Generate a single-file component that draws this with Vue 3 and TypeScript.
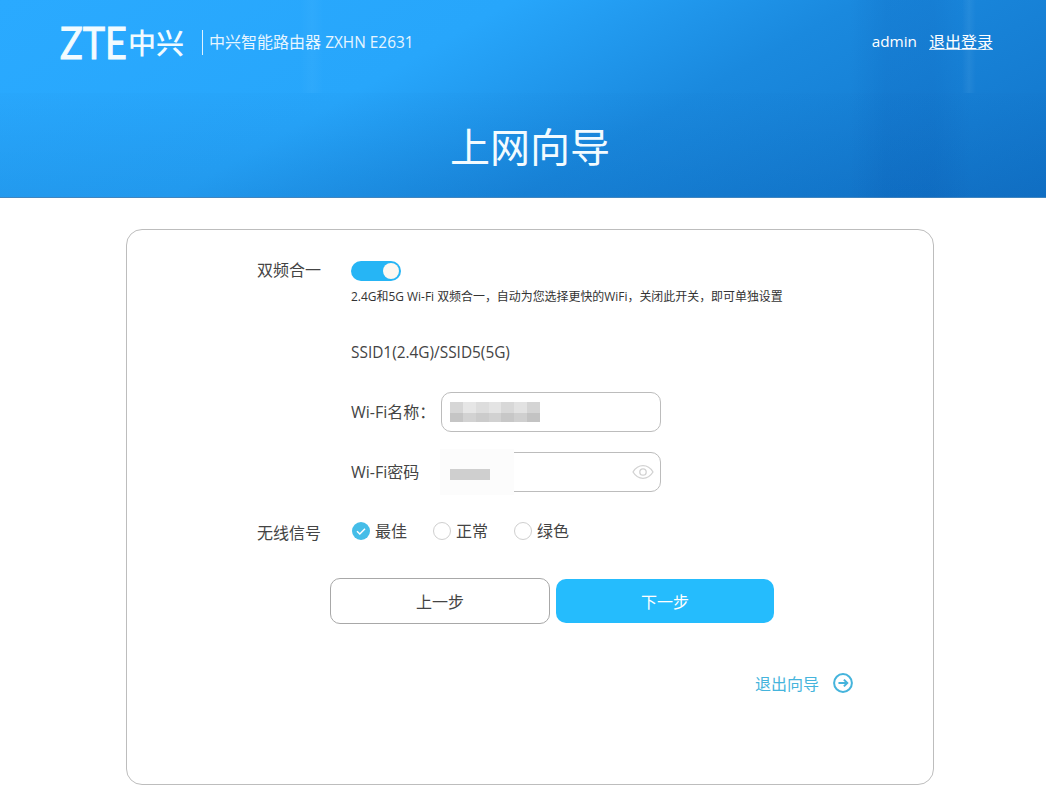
<script setup lang="ts">
const options = [
  { label: '最佳', checked: true },
  { label: '正常', checked: false },
  { label: '绿色', checked: false },
]
const nameMosaic = ['#d6d6d6', '#e6e6e6', '#dddddd', '#e4e4e4', '#d8d8d8', '#e2e2e2', '#d4d4d4']
</script>

<template>
  <div class="page">
    <header class="hero">
      <div class="topbar">
        <div class="brand">
          <span class="zte"><span class="zte-text">ZTE</span></span><span class="zh">中兴</span>
          <span class="product">中兴智能路由器 <span class="model">ZXHN E2631</span></span>
        </div>
        <div class="user">
          <span>admin</span>
          <a class="logout">退出登录</a>
        </div>
      </div>
      <h1 class="title">上网向导</h1>
    </header>

    <main class="card">
      <section class="row dual">
        <div class="label">双频合一</div>
        <div class="dual-body">
          <div class="toggle"><span class="knob"></span></div>
          <p class="hint">2.4G和5G Wi-Fi 双频合一，自动为您选择更快的WiFi，关闭此开关，即可单独设置</p>
        </div>
      </section>

      <div class="ssid">SSID1(2.4G)/SSID5(5G)</div>

      <div class="field first">
        <label class="field-label">Wi-Fi名称：</label>
        <div class="input">
          <div class="mosaic">
            <i v-for="(c, i) in nameMosaic" :key="i" :style="{ background: c }"></i>
          </div>
        </div>
      </div>

      <div class="field second">
        <label class="field-label">Wi-Fi密码</label>
        <div class="input">
          <div class="mosaic small"><i></i><i></i><i></i></div>
          <svg class="eye" viewBox="0 0 22 16" width="22" height="16" fill="none" stroke="#d2d2d2" stroke-width="1.3">
            <path d="M1 8c2.600-4.200 6-6.300 10-6.300S18.400 3.800 21 8c-2.600 4.200-6 6.300-10 6.300S3.600 12.200 1 8z" />
            <circle cx="11" cy="8" r="3.200" />
          </svg>
        </div>
      </div>

      <section class="row signal">
        <div class="label">无线信号</div>
        <div class="radios">
          <div v-for="o in options" :key="o.label" class="radio">
            <svg v-if="o.checked" viewBox="0 0 18 18" width="18" height="18">
              <circle cx="9" cy="9" r="9" fill="#45bde8" />
              <path d="M5 9.300l2.800 2.700L13 6.800" fill="none" stroke="#fff" stroke-width="1.500" />
            </svg>
            <span v-else class="dot"></span>
            <span class="radio-text">{{ o.label }}</span>
          </div>
        </div>
      </section>

      <div class="actions">
        <button class="btn prev" type="button">上一步</button>
        <button class="btn next" type="button">下一步</button>
      </div>

      <div class="exit">
        <span>退出向导</span>
        <svg viewBox="0 0 22 22" width="20" height="20" fill="none" stroke="#45b4dc" stroke-width="2.200">
          <circle cx="11" cy="11" r="9.800" />
          <path d="M6 11h9.500M12 7.300l3.700 3.700-3.700 3.700" />
        </svg>
      </div>
    </main>
  </div>
</template>

<style>
html, body { margin: 0; background: #fff; }
</style>

<style scoped>
.page {
  width: 1046px;
  height: 797px;
  overflow: hidden;
  font-family: "Open Sans", "Noto Sans CJK SC", sans-serif;
  color: #333;
  background: #fff;
}
.hero {
  position: relative;
  height: 198px;
  overflow: hidden;
  color: #fff;
  background: linear-gradient(150deg, #2aaaff 0%, #27a6fb 37%, #1a89de 62%, #1274c9 100%);
  box-shadow: inset 0 -1px 0 #4a8fc6;
}
.hero::before {
  content: "";
  position: absolute;
  left: 0;
  right: 0;
  bottom: 0;
  height: 105px;
  background: linear-gradient(180deg, rgba(0, 70, 150, 0.02), rgba(0, 70, 150, 0.14));
}
.hero::after {
  content: "";
  position: absolute;
  inset: 0;
  background:
    linear-gradient(90deg, transparent, rgba(255, 255, 255, 0.05), transparent) 962px 0 / 14px 93px no-repeat,
    linear-gradient(90deg, transparent, rgba(255, 255, 255, 0.03), transparent) 300px 0 / 24px 93px no-repeat,
    linear-gradient(90deg, transparent, rgba(0, 60, 150, 0.1) 30%, rgba(0, 60, 150, 0.1) 70%, transparent) 850px 0 / 120px 198px no-repeat;
}
.topbar {
  position: relative;
  z-index: 1;
  height: 88px;
  display: flex;
  align-items: center;
  justify-content: space-between;
  padding: 0 53px 4px 60px;
  box-sizing: border-box;
}
.brand {
  display: flex;
  align-items: center;
  height: 40px;
}
.zte {
  display: block;
  flex: none;
  width: 69px;
  height: 40px;
}
.zte-text {
  display: inline-block;
  font-family: "Lato", sans-serif;
  font-weight: 400;
  font-size: 45px;
  line-height: 40px;
  -webkit-text-stroke: 1px #f2fbff;
  color: #f2fbff;
  transform: scaleX(0.84);
  transform-origin: left center;
}
.zh {
  flex: none;
  font-family: "Noto Sans CJK SC", sans-serif;
  font-weight: 500;
  font-size: 28px;
  line-height: 40px;
  width: 57px;
  margin-left: -1px;
  white-space: nowrap;
  color: #f2fbff;
}
.product {
  margin-left: 17px;
  padding-left: 6px;
  border-left: 1px solid rgba(255, 255, 255, 0.85);
  font-size: 16px;
  line-height: 24px;
  color: #e6f5ff;
  white-space: nowrap;
}
.model {
  font-size: 15.400px;
}
.user {
  display: flex;
  align-items: center;
  gap: 12px;
  padding-bottom: 3px;
  font-size: 15.300px;
}
.logout {
  font-size: 16px;
  text-decoration: underline;
  text-underline-offset: 1px;
  text-decoration-color: rgba(255, 255, 255, 0.7);
}
.title {
  position: relative;
  z-index: 1;
  margin: 0;
  height: 110px;
  box-sizing: border-box;
  display: flex;
  align-items: center;
  justify-content: center;
  padding: 4px 0 0 14px;
  font-weight: 400;
  font-size: 40px;
  line-height: 56px;
  color: #f3fbff;
  font-family: "Noto Sans CJK SC", sans-serif;
}
.card {
  box-sizing: border-box;
  width: 808px;
  height: 556px;
  margin: 31px 0 0 126px;
  padding: 31px 80px 0 130px;
  border: 1px solid #bdbdbd;
  border-radius: 16px;
  font-size: 16px;
}
.row {
  display: flex;
}
.label {
  width: 94px;
  flex: none;
  font-size: 16px;
  color: #444;
}
.dual .label {
  line-height: 18px;
}
.toggle {
  position: relative;
  width: 50px;
  height: 20px;
  border-radius: 10px;
  background: #26b5f5;
}
.knob {
  position: absolute;
  right: 2px;
  top: 2px;
  width: 16px;
  height: 16px;
  border-radius: 50%;
  background: #fdf8f2;
}
.hint {
  margin: 8px 0 0;
  font-size: 11.950px;
  line-height: 16px;
  color: #333;
  white-space: nowrap;
}
.ssid {
  margin: 36px 0 0 94px;
  font-size: 15.400px;
  line-height: 24px;
  color: #444;
}
.field {
  display: flex;
  align-items: center;
  margin-left: 94px;
}
.field.first {
  margin-top: 27px;
}
.field.second {
  margin-top: 20px;
}
.field-label {
  width: 90px;
  flex: none;
  padding-bottom: 2px;
  font-size: 16px;
  color: #444;
}
.input {
  position: relative;
  box-sizing: border-box;
  width: 220px;
  height: 40px;
  display: flex;
  align-items: center;
  justify-content: space-between;
  padding: 0 6px 0 8px;
  border: 1px solid #bcbcbc;
  border-radius: 10px;
  background: #fff;
}
.second .input::before {
  content: "";
  position: absolute;
  left: -2px;
  top: -4px;
  width: 74px;
  height: 46px;
  background: #fcfcfc;
}
.mosaic {
  position: relative;
  display: flex;
  width: 90px;
  height: 20px;
}
.mosaic i {
  flex: 1;
}
.mosaic::after {
  content: "";
  position: absolute;
  left: 0;
  right: 0;
  bottom: 0;
  height: 9px;
  background: rgba(120, 120, 120, 0.18);
}
.mosaic.small {
  width: 40px;
  height: 11px;
  margin-top: 4px;
}
.mosaic.small::after {
  display: none;
}
.mosaic.small i {
  background: #cfcfcf;
}
.eye {
  flex: none;
}
.signal {
  margin-top: 28px;
  align-items: center;
  height: 24px;
}
.radios {
  display: flex;
  gap: 26px;
  margin-top: -2px;
  margin-left: 1px;
}
.radio {
  display: flex;
  align-items: center;
  gap: 5px;
  font-size: 16px;
  color: #444;
}
.radio-text {
  margin-bottom: 3px;
}
.dot {
  box-sizing: border-box;
  width: 18px;
  height: 18px;
  border-radius: 50%;
  border: 1px solid #cfcfcf;
}
.actions {
  display: flex;
  align-items: center;
  gap: 6px;
  margin: 34px 0 0 73px;
}
.btn {
  font-family: inherit;
  font-size: 16px;
  padding: 0;
  cursor: pointer;
}
.prev {
  width: 220px;
  height: 46px;
  border: 1px solid #a8a8a8;
  border-radius: 10px;
  background: #fff;
  color: #444;
}
.next {
  width: 218px;
  height: 44px;
  border: 0;
  border-radius: 10px;
  background: #25bcfd;
  color: #fff;
}
.exit {
  display: flex;
  align-items: center;
  justify-content: flex-end;
  gap: 14px;
  margin-top: 47px;
  font-size: 16px;
  color: #45b4dc;
}
</style>
